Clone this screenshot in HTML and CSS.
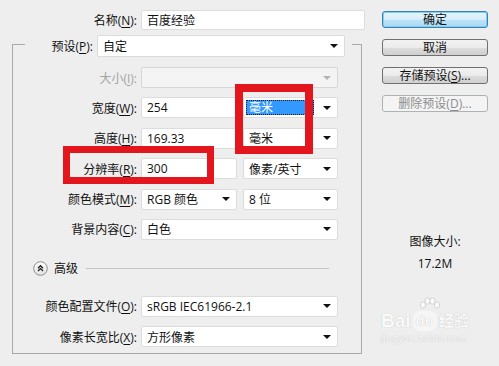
FILE: index.html
```html
<!DOCTYPE html>
<html lang="zh-CN">
<head>
  <meta charset="UTF-8">
  <title>新建</title>
  <link rel="stylesheet" href="styles.css">
</head>
<body>
  <div class="dialog">
    <div class="main">
      <div class="row name-row">
        <label class="lbl">名称(<u>N</u>):</label>
        <div class="field">百度经验</div>
      </div>

      <fieldset class="group">
        <legend class="preset">
          <label class="lbl preset-lbl">预设(<u>P</u>):</label>
          <div class="field select preset-sel">自定<span class="arrow"></span></div>
        </legend>

        <div class="rows">
          <div class="row disabled">
            <label class="lbl">大小(<u>I</u>):</label>
            <div class="field select grow off"><span></span><span class="arrow"></span></div>
          </div>
          <div class="row">
            <label class="lbl">宽度(<u>W</u>):</label>
            <div class="field half">254</div>
            <div class="field select half">
              <span class="picked">毫米</span><span class="arrow"></span>
            </div>
          </div>
          <div class="row">
            <label class="lbl">高度(<u>H</u>):</label>
            <div class="field half">169.33</div>
            <div class="field select half">毫米<span class="arrow"></span></div>
          </div>
          <div class="row">
            <label class="lbl">分辨率(<u>R</u>):</label>
            <div class="field half">300</div>
            <div class="field select half">像素/英寸<span class="arrow"></span></div>
          </div>
          <div class="row">
            <label class="lbl">颜色模式(<u>M</u>):</label>
            <div class="field select half">RGB 颜色<span class="arrow"></span></div>
            <div class="field select half">8 位<span class="arrow"></span></div>
          </div>
          <div class="row">
            <label class="lbl">背景内容(<u>C</u>):</label>
            <div class="field select grow">白色<span class="arrow"></span></div>
          </div>
        </div>

        <div class="advanced">
          <svg class="toggle" width="15" height="15" viewBox="0 0 15 15">
            <defs>
              <linearGradient id="tg" x1="0" y1="0" x2="0" y2="1">
                <stop offset="0" stop-color="#ffffff"/>
                <stop offset="1" stop-color="#e2e2e2"/>
              </linearGradient>
            </defs>
            <circle cx="7.5" cy="7.5" r="6.8" fill="url(#tg)" stroke="#8c8c8c"/>
            <path d="M5 7.2 L7.5 4.8 L10 7.2 M5 10 L7.5 7.6 L10 10" fill="none" stroke="#222" stroke-width="1.4"/>
          </svg>
          <span>高级</span>
          <span class="rule"></span>
        </div>

        <div class="rows lower">
          <div class="row">
            <label class="lbl">颜色配置文件(<u>O</u>):</label>
            <div class="field select grow">sRGB IEC61966-2.1<span class="arrow"></span></div>
          </div>
          <div class="row">
            <label class="lbl">像素长宽比(<u>X</u>):</label>
            <div class="field select grow">方形像素<span class="arrow"></span></div>
          </div>
        </div>
      </fieldset>
    </div>

    <div class="side">
      <button class="btn default">确定</button>
      <button class="btn">取消</button>
      <button class="btn">存储预设(<u>S</u>)...</button>
      <button class="btn" disabled>删除预设(<u>D</u>)...</button>

      <div class="size-info">
        <div>图像大小:</div>
        <div class="size-val">17.2M</div>
      </div>
    </div>

    <!-- annotations drawn over the dialog -->
    <div class="mark mark-units"></div>
    <div class="mark mark-res"></div>

    <div class="watermark">
      <div class="wm-top">
        <span>Bai</span>
        <span class="wm-du">
          <svg class="paw" width="22" height="14" viewBox="0 0 22 14">
            <ellipse cx="4" cy="8" rx="2.6" ry="3.2" fill="#fbfbfb" stroke="#d2d2d2"/>
            <ellipse cx="8.5" cy="4" rx="2.6" ry="3.2" fill="#fbfbfb" stroke="#d2d2d2"/>
            <ellipse cx="13.5" cy="4" rx="2.6" ry="3.2" fill="#fbfbfb" stroke="#d2d2d2"/>
            <ellipse cx="18" cy="8" rx="2.6" ry="3.2" fill="#fbfbfb" stroke="#d2d2d2"/>
          </svg>
          du
        </span>
        <span class="wm-cn">经验</span>
      </div>
      <div class="wm-url">jingyan.baidu.com</div>
    </div>
  </div>
</body>
</html>
```

FILE: styles.css
```css
body {
  margin: 0;
  background: #eeeeee;
  font-family: "Open Sans", "Noto Sans CJK SC", sans-serif;
  font-size: 12px;
  color: #111;
}

.dialog {
  position: relative;
  width: 499px;
  height: 366px;
  overflow: hidden;
  display: flex;
}

.main {
  width: 365px;
  padding-top: 10px;
}

u {
  text-decoration: underline;
  text-underline-offset: 2px;
}

.row {
  display: flex;
  align-items: center;
  gap: 6px;
  height: 21px;
}

.lbl {
  width: 112px;
  margin-right: -2px;
  text-align: right;
  white-space: nowrap;
}

.name-row {
  height: 20px;
}

.name-row .lbl {
  width: 137px;
}

.name-row .field {
  width: 224px;
  height: 20px;
}

.field {
  box-sizing: border-box;
  height: 21px;
  display: flex;
  align-items: center;
  justify-content: space-between;
  padding: 0 6px 0 5px;
  background: #fff;
  border: 1px solid #dcdcdc;
  border-radius: 2px;
  white-space: nowrap;
}

.grow {
  flex: 1;
}

.half {
  width: 96px;
}

.half + .half {
  width: 95px;
}

.arrow {
  width: 0;
  height: 0;
  border-left: 4px solid transparent;
  border-right: 4px solid transparent;
  border-top: 4px solid #111;
}

.picked {
  flex: 1;
  margin: 0 9px 0 -3px;
  padding: 0 2px;
  line-height: 13px;
  background: #3399ff;
  color: #fff;
  border: 1px dotted #1a1a1a;
}

/* group box, the preset row sits on its top edge */
.group {
  box-sizing: border-box;
  width: 350px;
  min-width: 0;
  margin: 1px 0 0 12px;
  padding: 10px 23px 6px 12px;
  border: 1px solid #a9a9a9;
}

.preset {
  display: flex;
  align-items: center;
  gap: 4px;
  padding: 4px 7px 0 0;
}

.preset-lbl {
  width: 68px;
  margin-right: 0;
}

.preset-sel {
  width: 248px;
  height: 22px;
}

.rows {
  display: flex;
  flex-direction: column;
  gap: 9.4px;
}

.disabled .lbl {
  color: #a3a3a3;
}

.off {
  background: #f4f4f4;
  border-color: #d6d6d6;
}

.off .arrow {
  border-top-color: #b4b4b4;
}

.advanced {
  display: flex;
  align-items: center;
  height: 15px;
  margin: 21px 0 0 8px;
}

.toggle {
  margin-right: 6px;
}

.rule {
  flex: 1;
  height: 1px;
  margin: 0 9px 0 8px;
  background: #c4c4c4;
}

.lower {
  margin-top: 20px;
}

/* right column */
.side {
  width: 106px;
  margin-left: 17px;
  padding-top: 11px;
  display: flex;
  flex-direction: column;
  gap: 11px;
}

.btn {
  height: 17px;
  padding: 0;
  font: inherit;
  line-height: 15px;
  color: #111;
  border: 1px solid #707070;
  border-radius: 3px;
  background: linear-gradient(#f2f2f2 0%, #ebebeb 50%, #dddddd 51%, #cfcfcf 100%);
}

.btn.default {
  border-color: #3c7fb1;
  background: linear-gradient(#e6f5fd 0%, #d6eefb 50%, #bde3f8 51%, #a8d9f5 100%);
  box-shadow: inset 0 0 0 1px #7ed0f3;
}

.btn:disabled {
  color: #8c8c8c;
  border-color: #adb2b5;
  background: #f4f4f4;
}

.size-info {
  margin-top: 108px;
  text-align: center;
  line-height: 22px;
}

/* red annotation boxes */
.mark {
  position: absolute;
  box-sizing: border-box;
  border: 8px solid #e2161c;
}

.mark-units {
  left: 235px;
  top: 84px;
  width: 78px;
  height: 70px;
}

.mark-res {
  left: 63px;
  top: 146px;
  width: 151px;
  height: 38px;
  border-width: 7px;
}

/* faint site watermark */
.watermark {
  position: absolute;
  left: 381px;
  top: 311px;
  color: #fafafa;
  font-family: "Liberation Sans", "Noto Sans CJK SC", sans-serif;
  text-shadow: 0 0 1px #b4b4b4;
}

.wm-top {
  display: flex;
  align-items: flex-end;
  font-size: 19px;
  font-weight: bold;
  line-height: 20px;
}

.wm-du {
  position: relative;
  margin: 0 2px;
  padding: 0 3px;
  background: #f6f6f6;
  border-radius: 8px;
  font-size: 15px;
}

.paw {
  position: absolute;
  left: 6px;
  top: -14px;
}

.wm-cn {
  font-size: 15px;
}

.wm-url {
  margin-top: 2px;
  font-size: 10px;
  letter-spacing: 0.3px;
}
```
